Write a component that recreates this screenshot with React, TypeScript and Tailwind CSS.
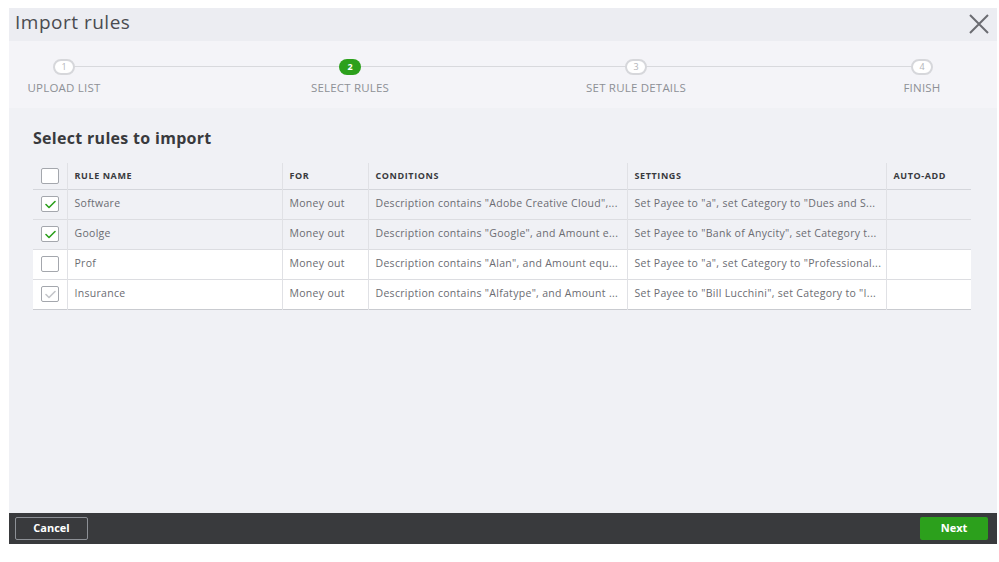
import React from "react";

const steps = [
  { n: 1, label: "UPLOAD LIST", active: false },
  { n: 2, label: "SELECT RULES", active: true },
  { n: 3, label: "SET RULE DETAILS", active: false },
  { n: 4, label: "FINISH", active: false },
];

const rules = [
  {
    name: "Software",
    checked: "on",
    cond: "Description contains \"Adobe Creative Cloud\",...",
    settings: "Set Payee to \"a\", set Category to \"Dues and S...",
    white: false,
  },
  {
    name: "Goolge",
    checked: "on",
    cond: "Description contains \"Google\", and Amount e...",
    settings: "Set Payee to \"Bank of Anycity\", set Category t...",
    white: false,
  },
  {
    name: "Prof",
    checked: "off",
    cond: "Description contains \"Alan\", and Amount equ...",
    settings: "Set Payee to \"a\", set Category to \"Professional...",
    white: true,
  },
  {
    name: "Insurance",
    checked: "dim",
    cond: "Description contains \"Alfatype\", and Amount ...",
    settings: "Set Payee to \"Bill Lucchini\", set Category to \"I...",
    white: true,
  },
];

function Checkbox({ state }: { state: string }) {
  return (
    <div className="w-[18px] h-[16px] bg-white border border-[#a4a7ad] rounded-[2px] flex items-center justify-center">
      {state !== "off" && (
        <svg width="11" height="9" viewBox="0 0 11 9" fill="none">
          <path
            d="M1 4.5 L4 7.5 L10 1.5"
            stroke={state === "on" ? "#2ca01c" : "#c4c6ca"}
            strokeWidth="1.6"
            strokeLinecap="round"
            strokeLinejoin="round"
          />
        </svg>
      )}
    </div>
  );
}

export default function App() {
  return (
    <div
      className="w-[999px] h-[562px] bg-white pt-[8px] pl-[9px]"
      style={{ fontFamily: '"Open Sans", "Liberation Sans", sans-serif' }}
    >
      <div className="w-[988px] h-[536px] flex flex-col">
        {/* header */}
        <div className="h-[33px] bg-[#ecedf2] flex items-center justify-between pl-[6px] pr-[7px] pb-[5px]">
          <h1 className="text-[19px] text-[#4a4b50] tracking-[0.5px]">Import rules</h1>
          <svg width="22" height="22" viewBox="0 0 22 22" fill="none" className="mt-[4px]">
            <path d="M2 2 L20 20 M20 2 L2 20" stroke="#6b6c72" strokeWidth="2" />
          </svg>
        </div>

        {/* stepper */}
        <div className="h-[67px] bg-[#f4f4f8] pl-[11px] pr-[31px] pt-[18px]">
          <div className="relative flex justify-between">
            <div className="absolute left-[44px] right-[44px] top-[7px] h-px bg-[#d8d9dd]" />
            {steps.map((s) => (
              <div key={s.n} className="relative w-[88px] flex flex-col items-center">
                <div
                  className={
                    s.active
                      ? "w-[22px] h-[16px] rounded-full bg-[#2ca01c] text-white text-[9px] font-bold flex items-center justify-center"
                      : "w-[22px] h-[16px] rounded-full bg-white border-2 border-[#d6d7db] text-[#b3b5ba] text-[9px] flex items-center justify-center"
                  }
                >
                  {s.n}
                </div>
                <div className="mt-[4px] whitespace-nowrap text-[11.5px] tracking-[0.2px] text-[#8d9096]">
                  {s.label}
                </div>
              </div>
            ))}
          </div>
        </div>

        {/* body */}
        <div className="flex-1 bg-[#f0f1f5] px-[24px] pt-[18px]">
          <h2 className="text-[16px] font-bold text-[#393a3d] tracking-[0.3px]">Select rules to import</h2>
          <table className="mt-[13px] w-[938px] table-fixed border-collapse text-[10.5px] tracking-[0.3px] text-[#6b6c72]">
            <colgroup>
              <col className="w-[34px]" />
              <col className="w-[215px]" />
              <col className="w-[86px]" />
              <col className="w-[259px]" />
              <col className="w-[259px]" />
              <col className="w-[85px]" />
            </colgroup>
            <thead>
              <tr className="h-[26px] border-b border-[#d4d6db]">
                <th className="px-[8px]">
                  <Checkbox state="off" />
                </th>
                {["RULE NAME", "FOR", "CONDITIONS", "SETTINGS", "AUTO-ADD"].map((h) => (
                  <th
                    key={h}
                    className="border-l border-[#e0e1e5] px-[7px] text-left text-[9px] font-bold text-[#393a3d] tracking-[0.6px]"
                  >
                    {h}
                  </th>
                ))}
              </tr>
            </thead>
            <tbody>
              {rules.map((r, i) => (
                <tr
                  key={r.name}
                  className={
                    (r.white ? "bg-white" : "bg-[#f0f1f5]") +
                    (i === rules.length - 1
                      ? " h-[30px] border-b border-[#c9cbd0]"
                      : " h-[30px] border-b border-[#dcdde1]")
                  }
                >
                  <td className="px-[8px]">
                    <Checkbox state={r.checked} />
                  </td>
                  <td className="border-l border-[#e0e1e5] px-[7px] whitespace-nowrap overflow-hidden">
                    {r.name}
                  </td>
                  <td className="border-l border-[#e0e1e5] px-[7px] whitespace-nowrap overflow-hidden">
                    Money out
                  </td>
                  <td className="border-l border-[#e0e1e5] px-[7px] whitespace-nowrap overflow-hidden">
                    {r.cond}
                  </td>
                  <td className="border-l border-[#e0e1e5] px-[7px] whitespace-nowrap overflow-hidden">
                    {r.settings}
                  </td>
                  <td className="border-l border-[#e0e1e5] px-[7px]" />
                </tr>
              ))}
            </tbody>
          </table>
        </div>

        {/* footer */}
        <div className="h-[31px] bg-[#393a3d] flex items-center justify-between pl-[6px] pr-[9px]">
          <button className="w-[73px] h-[23px] border border-[#8d9096] rounded-[2px] text-white text-[11px] font-bold">
            Cancel
          </button>
          <button className="w-[68px] h-[23px] bg-[#2ca01c] rounded-[2px] text-white text-[11px] font-bold">
            Next
          </button>
        </div>
      </div>
    </div>
  );
}
